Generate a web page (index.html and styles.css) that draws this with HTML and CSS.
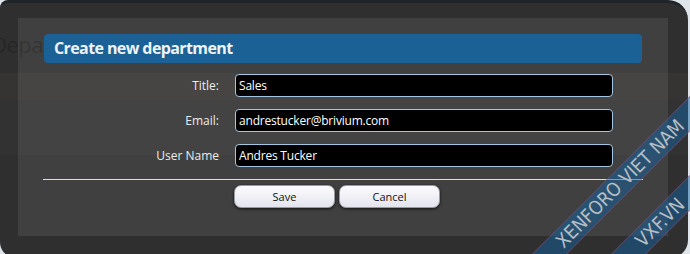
FILE: index.html
```html
<!DOCTYPE html>
<html>
<head>
<meta charset="utf-8">
<link rel="stylesheet" href="styles.css">
</head>
<body>
<div class="page">
  <div class="frame">
    <div class="panel">
      <h2 class="bar">Create new department</h2>
      <div class="form">
        <label class="label">Title:</label>
        <input class="field" type="text" value="Sales">
        <label class="label">Email:</label>
        <input class="field" type="text" value="andrestucker@brivium.com">
        <label class="label">User Name</label>
        <input class="field" type="text" value="Andres Tucker">
      </div>
      <div class="sep"></div>
      <div class="buttons">
        <button class="btn">Save</button>
        <button class="btn">Cancel</button>
      </div>
    </div>
  </div>
  <div class="ghost">Depa</div>
  <div class="band band-a"></div>
  <div class="band band-b"></div>
  <div class="stripe stripe-1"><span>XENFORO VIET NAM</span></div>
  <div class="stripe stripe-2"><span>VXF.VN</span></div>
</div>
</body>
</html>
```

FILE: styles.css
```css
html, body {
  margin: 0;
  padding: 0;
}
body {
  background: #dfe5eb;
  font-family: "Open Sans", "Liberation Sans", sans-serif;
}
.page {
  position: relative;
  width: 690px;
  height: 254px;
  overflow: hidden;
}
.frame {
  width: 688px;
  height: 258px;
  box-sizing: border-box;
  background: #2f2f2f;
  border-top: 3px solid #1f2429;
  border-radius: 8px 20px 18px 16px;
  padding: 15px 20px 0 18px;
}
.panel {
  width: 650px;
  height: 218px;
  box-sizing: border-box;
  background: #404040;
  padding: 16px 26px 0 26px;
}
.bar {
  position: relative;
  z-index: 2;
  margin: 0;
  height: 29px;
  box-sizing: border-box;
  background: #1b6195;
  border-radius: 4px;
  color: #eef3f8;
  font-size: 16px;
  font-weight: 700;
  letter-spacing: -0.6px;
  line-height: 29px;
  padding-left: 10px;
}
.form {
  position: relative;
  z-index: 2;
  display: grid;
  grid-template-columns: 175px 378px;
  column-gap: 16px;
  row-gap: 12px;
  margin-top: 11px;
  align-items: center;
}
.label {
  text-align: right;
  color: #ececec;
  font-size: 12px;
}
.field {
  display: block;
  width: 378px;
  height: 23px;
  box-sizing: border-box;
  margin: 0;
  border: 1px solid #a3c6e2;
  border-radius: 4px;
  background: #000;
  color: #fff;
  font-family: "Open Sans", "Liberation Sans", sans-serif;
  font-size: 12px;
  letter-spacing: -0.2px;
  padding: 0 3px;
  outline: none;
}
.sep {
  position: relative;
  z-index: 2;
  height: 1px;
  background: #d3dfea;
  margin: 12px 0 0 -1px;
  width: 600px;
}
.buttons {
  position: relative;
  z-index: 2;
  display: flex;
  gap: 4px;
  margin: 5px 0 0 190px;
}
.btn {
  width: 101px;
  height: 23px;
  margin: 0;
  padding: 0;
  border: 1px solid #9a9aa4;
  border-radius: 7px;
  background: linear-gradient(#fcfcfe, #e4e4ee);
  box-shadow: 0 1px 3px rgba(0, 0, 0, 0.75);
  color: #111;
  font-family: "Open Sans", "Liberation Sans", sans-serif;
  font-size: 11px;
}
.ghost {
  position: absolute;
  z-index: 1;
  left: -9px;
  top: 29px;
  font-size: 22px;
  letter-spacing: -0.5px;
  color: rgba(0, 0, 0, 0.2);
  white-space: nowrap;
}
.band {
  position: absolute;
  z-index: 1;
  left: 0;
  width: 690px;
  pointer-events: none;
}
.band-a {
  top: 73px;
  height: 27px;
  background: rgba(255, 225, 190, 0.03);
}
.band-b {
  top: 100px;
  height: 55px;
  background: rgba(255, 255, 255, 0.015);
}
.stripe {
  position: absolute;
  z-index: 5;
  width: 420px;
  height: 25px;
  box-sizing: border-box;
  background: rgba(20, 100, 160, 0.5);
  border-top: 1px solid rgba(190, 60, 90, 0.35);
  border-bottom: 1px solid rgba(190, 60, 90, 0.35);
  transform: rotate(-45deg);
  display: flex;
  justify-content: center;
  align-items: center;
  color: #b6bec6;
  font-family: "DejaVu Sans Condensed", "DejaVu Sans", sans-serif;
  font-stretch: condensed;
  font-size: 19px;
  line-height: 23px;
  white-space: nowrap;
}
.stripe-1 {
  left: 410px;
  top: 171px;
}
.stripe-2 {
  left: 450px;
  top: 210px;
}
```
